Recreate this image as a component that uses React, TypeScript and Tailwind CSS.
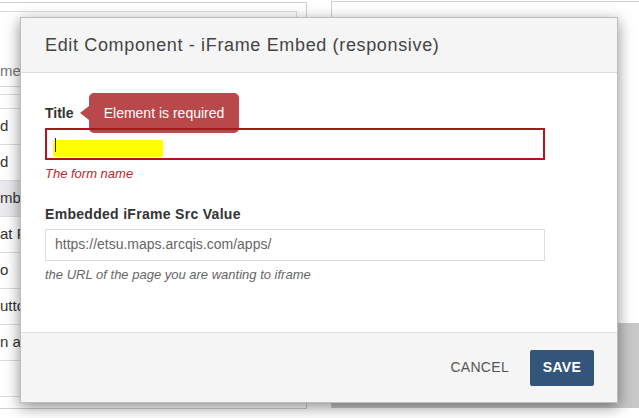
import React from "react";

const rows = [
  { text: "d", active: false },
  { text: "d", active: false },
  { text: "mbed", active: true },
  { text: "at Form", active: false },
  { text: "o", active: false },
  { text: "utton", active: false },
  { text: "n auto", active: false },
  { text: "", active: false },
];

function BackgroundList() {
  return (
    <div className="w-[307px] h-[407px] mt-[2px] border-r border-b border-t border-[#cfcfcf] shrink-0">
      <div className="w-[297px] mt-[8px] border-t border-r border-[#dcdcdc] h-[380px]">
        <div className="h-[75px] flex items-end pb-[4px] text-[15px] text-[#777] border-b border-[#d6d6d6]">
          <span>me</span>
        </div>
        <div className="h-[8px] border-b border-[#dddddd]" />
        <div className="h-[14px] border-b border-[#dddddd]" />
        {rows.map((r, i) => (
          <div
            key={i}
            className={
              "h-[36px] flex items-center text-[15px] text-[#333] border-b border-[#dddddd] whitespace-nowrap overflow-hidden " +
              (r.active ? "bg-[#e9e9ee]" : "")
            }
          >
            {r.text}
          </div>
        ))}
      </div>
    </div>
  );
}

export default function App() {
  return (
    <div
      className="relative w-[639px] h-[418px] bg-white overflow-hidden"
      style={{ fontFamily: '"Liberation Sans", Arial, sans-serif' }}
    >
      {/* page behind the dialog */}
      <div className="flex">
        <BackgroundList />
        <div className="ml-[24px] flex-1 h-[407px] mt-[1px] border-t border-l border-[#cfcfcf] flex flex-col justify-end">
          <div className="h-[85px] bg-[#c8c8c8]" />
        </div>
      </div>

      {/* dialog */}
      <div className="absolute left-[20px] top-[17px] w-[598px] h-[386px] bg-white flex flex-col shadow-[0_4px_14px_rgba(0,0,0,0.45)] border border-[#bdbdbd]">
        <div className="h-[55px] bg-[#f5f5f5] border-b border-[#dedede] flex items-center px-[24px]">
          <h1 className="text-[18px] text-[#444] tracking-[0.65px]">Edit Component - iFrame Embed (responsive)</h1>
        </div>

        <div className="flex-1 px-[24px] pt-[31px]">
          <div className="relative flex items-center h-[18px]">
            <label className="text-[14px] font-bold text-[#333]">Title</label>
            <div className="absolute left-[35px] top-[-11px] flex items-center">
              <div className="w-0 h-0 border-y-[7px] border-y-transparent border-r-[9px] border-r-[#b9484b]" />
              <div className="w-[150px] h-[40px] rounded-[5px] bg-[#b9484b] text-white text-[14px] flex items-center justify-center">
                Element is required
              </div>
            </div>
          </div>
          <div className="mt-[6px] w-[500px] h-[32px] border-2 border-[#a8191d] relative">
            <div className="absolute left-[6px] top-[10px] w-[110px] h-[17px] bg-[#ffff00] rounded-[2px]" />
            <div className="absolute left-[8px] top-[8px] w-px h-[14px] bg-[#222]" />
          </div>
          <p className="mt-[4px] text-[13px] italic text-[#b8282c]">The form name</p>

          <label className="block mt-[20px] text-[14px] font-bold text-[#333] tracking-[0.3px]">Embedded iFrame Src Value</label>
          <div className="mt-[4px] w-[500px] h-[32px] border border-[#dddddd] flex items-center px-[9px] text-[14px] text-[#666]">
            https://etsu.maps.arcqis.com/apps/
          </div>
          <p className="mt-[4px] text-[13px] italic text-[#666]">the URL of the page you are wanting to iframe</p>
        </div>

        <div className="h-[70px] bg-[#f5f5f5] border-t border-[#dedede] flex items-center justify-end gap-[21px] pr-[23px]">
          <button className="text-[14px] text-[#555] uppercase tracking-[0.3px]">Cancel</button>
          <button className="w-[64px] h-[36px] rounded-[2px] bg-[#34557a] text-white text-[14px] font-bold tracking-[0.3px]">
            SAVE
          </button>
        </div>
      </div>
    </div>
  );
}
